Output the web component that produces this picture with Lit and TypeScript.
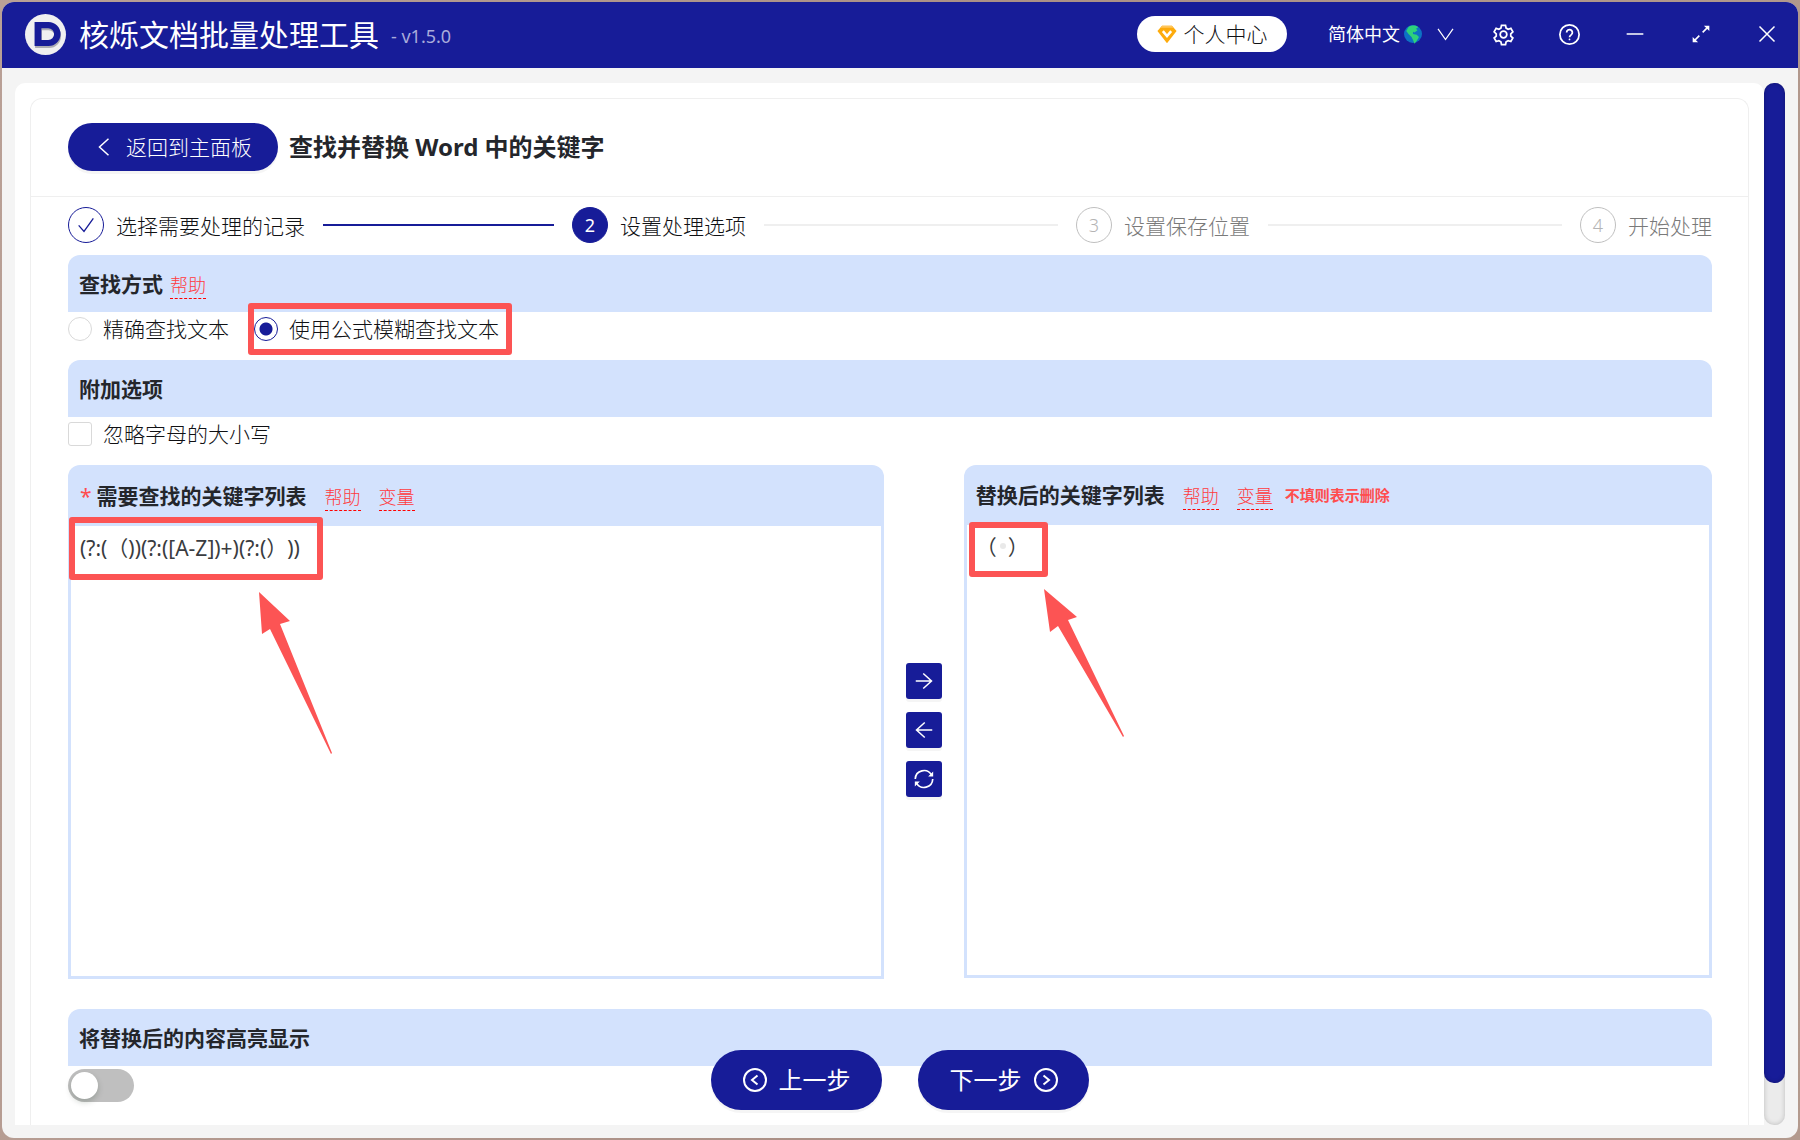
import { LitElement, html, css, svg, nothing } from "lit";
import { customElement, state } from "lit/decorators.js";
import { classMap } from "lit/directives/class-map.js";

const icon = (cls: string, body: unknown, box = "0 0 24 24") =>
  html`<svg class="icon ${cls}" viewBox=${box} aria-hidden="true">${body}</svg>`;

const icons = {
  logo: svg`<circle cx="12" cy="12" r="12" fill="#f0f0f0"/>
    <path d="M5.6 5h8.2a7 7 0 0 1 0 14H5.6z M9.6 8.6v6.9h4a3.45 3.45 0 0 0 0-6.9z" fill="#8e8e98" fill-rule="evenodd" transform="translate(0.3 0.9)" opacity="0.7"/>
    <path d="M5.6 4.7h8.2a7 7 0 0 1 0 14H5.6z M9.6 8.3v6.9h4a3.45 3.45 0 0 0 0-6.9z" fill="#171c98" fill-rule="evenodd"/>`,
  gem: svg`<path d="M6 2h12l5.5 6.5L12 23 0.5 8.5z" fill="#fdab0c"/>
    <path d="M6 2h12l2 2.5H4z" fill="#ffc65c"/>
    <path d="M7 8.5l5 6 5-6" fill="none" stroke="#fff" stroke-width="3"/>`,
  earth: svg`<circle cx="12" cy="12" r="12" fill="#0d72c4"/>
    <path d="M6 2.5C10 0 17 0 19 3l-3 2 2 2-4 3-2-1 0 3 5 1 3 3-3 5-3 4-2-5-2-4-4-4-3-4z" fill="#2ed27a"/>`,
  chevronDown: svg`<path d="M0 3l12 17 12-17"/>`,
  chevronLeft: svg`<path d="M18 1L6 12l12 11"/>`,
  gear: svg`<circle cx="12" cy="12" r="3.8"/>
    <path d="M9.7 1.5h4.6l.7 3.2 2.3 1.3 3.1-1 2.3 4-2.4 2.2v2.6l2.4 2.2-2.3 4-3.1-1-2.3 1.3-.7 3.2H9.7L9 20.3 6.700 19l-3.100 1-2.300-4 2.400-2.200v-2.600L1.300 9l2.300-4 3.100 1L9 4.700z"/>`,
  help: svg`<circle cx="12" cy="12" r="11"/><path d="M8.700 9.600a3.300 3.300 0 1 1 5.400 2.600c-1.300 1-2.100 1.500-2.100 3"/><circle cx="12" cy="17.600" r="1" fill="currentColor" stroke="none"/>`,
  minus: svg`<path d="M2 12h20"/>`,
  expand: svg`<path d="M14 10l7-7M10 14l-7 7"/><path d="M15.500 2H22v6.500zM2 15.500V22h6.500z" fill="currentColor" stroke="none"/>`,
  close: svg`<path d="M2 2l20 20M22 2L2 22"/>`,
  check: svg`<path d="M1 12.500l8 9L23 2"/>`,
  right: svg`<path d="M1 12h21M11 2l11 10-11 10"/>`,
  left: svg`<path d="M23 12H2M13 2L2 12l11 10"/>`,
  swap: svg`<path d="M1.500 12A10.500 10.500 0 0 1 21 7M22.500 12A10.500 10.500 0 0 1 3 17"/><path d="M23 3v6h-6zM1 21v-6h6z" fill="currentColor" stroke="none"/>`,
  prev: svg`<circle cx="12" cy="12" r="11"/><path d="M14.500 7.500L9 12l5.500 4.500"/>`,
  next: svg`<circle cx="12" cy="12" r="11"/><path d="M9.500 7.500L15 12l-5.500 4.500"/>`,
};

interface Step { title: string; status: "done" | "active" | "wait"; }

const STEPS: Step[] = [
  { title: "选择需要处理的记录", status: "done" },
  { title: "设置处理选项", status: "active" },
  { title: "设置保存位置", status: "wait" },
  { title: "开始处理", status: "wait" },
];

@customElement("app-root")
export class AppRoot extends LitElement {
  @state() private mode = "fuzzy";

  static styles = css`
    :host {
      --brand: #171c98;
      --soft: #d3e2fd;
      --mark: #fc5454;
      display: block;
      box-sizing: border-box;
      height: 100vh;
      padding: 2px;
      background: linear-gradient(100deg, #b9a096, #ab9086 50%, #b39a8e);
      color: #101114;
      font: 300 21px/30px "Noto Sans", "Noto Sans CJK SC", sans-serif;
    }
    * { box-sizing: border-box; }
    button, textarea, input { font: inherit; color: inherit; margin: 0; }
    button { border: 0; padding: 0; background: none; cursor: pointer; }
    h1, h2 { margin: 0; font-weight: 700; color: #24262b; }
    h2 { font-size: 21px; }
    .icon { flex: none; display: block; fill: none; stroke: currentColor; stroke-width: 2; overflow: visible; }
    .logo, .gem, .earth { stroke: none; }
    .s15 { width: 15px; height: 15px; }
    .s16 { width: 16px; height: 16px; }
    .s18 { width: 18px; height: 18px; }
    .s20 { width: 20px; height: 20px; }
    .s21 { width: 21px; height: 21px; }
    .s24 { width: 24px; height: 24px; }
    .s41 { width: 41px; height: 41px; }

    .window { height: 100%; display: flex; flex-direction: column; border-radius: 12px; overflow: hidden; background: #f4f4f4; }
    .titlebar { flex: none; height: 66px; padding: 0 10px 2px 23px; display: flex; align-items: center; background: var(--brand); color: #fff; }
    .name { font-size: 30px; font-weight: 400; line-height: 44px; margin-left: 13px; padding-top: 2px; }
    .version { margin-left: 12px; padding-top: 4px; font-size: 18px; font-weight: 400; color: #a9abdb; }
    .tools { margin-left: auto; display: flex; align-items: center; }
    .account { height: 36px; width: 150px; border-radius: 18px; background: #fff; color: #101114; display: flex; align-items: center; justify-content: center; gap: 7px; }
    .lang { margin-left: 41px; display: flex; align-items: center; gap: 4px; font-size: 18px; font-weight: 400; }
    .lang .s15 { margin-left: 12px; }
    .winbtns { display: flex; margin-left: 17px; }
    .winbtns button { width: 66px; height: 42px; display: grid; place-items: center; }
    .winbtns button:last-child { width: 42px; margin-left: 12px; }

    .body { flex: 1; min-height: 0; display: flex; padding: 15px 13px 13px; }
    .sheet { flex: 1; min-width: 0; padding: 15px 15px 0; background: #fff; border-radius: 10px 10px 0 0; }
    .card { height: 100%; display: flex; flex-direction: column; border: 1px solid #efefef; border-bottom: 0; border-radius: 12px 12px 0 0; }
    .track { flex: none; width: 21px; border-radius: 10px; background: #ebebeb; box-shadow: inset 0 0 5px #0003; }
    .thumb { height: 96%; border-radius: 10px; background: var(--brand); box-shadow: inset 0 0 4px #0004; }

    .cardhead { flex: none; height: 98px; padding: 0 37px 2px; display: flex; align-items: center; gap: 11px; border-bottom: 1px solid #efefef; }
    .cardhead h1 { font-size: 24px; line-height: 36px; }
    .back { height: 48px; padding: 0 26px 0 27px; display: flex; align-items: center; gap: 13px; border-radius: 24px; background: var(--brand); color: #fff; box-shadow: 0 3px 0 #0000000a; }
    .content { flex: 1; min-height: 0; padding: 10px 36px 23px 37px; display: flex; flex-direction: column; }

    .steps { list-style: none; margin: 0 0 12px; padding: 0; display: flex; }
    .step { flex: 1; display: flex; align-items: center; padding-right: 18px; }
    .step:last-child { flex: none; padding-right: 0; }
    .step:not(:last-child)::after { content: ""; flex: 1; height: 2px; margin-left: 18px; background: #efefef; }
    .step.done::after { background: var(--brand); }
    .steptext { padding-top: 2px; }
    .dot { flex: none; width: 36px; height: 36px; margin-right: 12px; border: 1px solid #c0c0c0; border-radius: 50%; display: grid; place-items: center; font-size: 18px; color: #b4b4b4; }
    .done .dot { border-color: var(--brand); color: var(--brand); }
    .active .dot { border-color: var(--brand); background: var(--brand); color: #fff; font-weight: 400; }
    .wait { color: #7a7a7a; }

    .bar { flex: none; height: 57px; padding: 0 11px; display: flex; align-items: center; background: var(--soft); border-radius: 12px 12px 0 0; }
    .link { margin-top: 3px; font-size: 18px; line-height: 26px; color: #ff3a3d; text-decoration: none; border-bottom: 1px dashed #f00; }
    .bar .link { margin-left: 7px; }
    .options { flex: none; height: 48px; padding-top: 2px; display: flex; align-items: flex-start; gap: 25px; }
    .option { display: flex; align-items: center; gap: 11px; position: relative; }
    .option input { appearance: none; flex: none; width: 24px; height: 24px; border: 1px solid #d9d9d9; background: #fff; }
    .option input[type="radio"] { border-radius: 50%; }
    .option input[type="checkbox"] { border-radius: 3px; }
    .option input[type="radio"]:checked { border-color: var(--brand); background: radial-gradient(circle, var(--brand) 6px, #fff 7px); }

    .editors { flex: 1; min-height: 200px; display: flex; margin-bottom: 30px; }
    .editor { display: flex; flex-direction: column; background: var(--soft); border-radius: 12px 12px 0 0; padding: 0 3px 3px; position: relative; }
    .find { flex: 816; }
    .replace { flex: 748; margin-bottom: 1px; }
    .edhead { flex: none; height: 61px; padding: 0 9px; display: flex; align-items: center; }
    .replace .edhead { height: 60px; }
    .edhead .link { margin-left: 18px; }
    .star { color: #ff4d4f; margin-right: 5px; font-weight: 400; }
    .note { margin-left: 12px; font-size: 15px; font-weight: 700; color: #ff4d4f; }
    textarea { flex: 1; width: 100%; padding: 7px 9px; border: 0; border-radius: 0; outline: 0; resize: none; background: #fff; color: #3a3c40; font-weight: 400; text-spacing-trim: space-all; }
    .moves { flex: none; width: 80px; display: flex; flex-direction: column; align-items: center; justify-content: center; gap: 13px; padding-top: 15px; }
    .moves button { width: 36px; height: 36px; display: grid; place-items: center; border-radius: 3px; background: var(--brand); color: #fff; box-shadow: 0 3px 0 #0000000a; }

    .switch { appearance: none; flex: none; width: 66px; height: 33px; margin: 3px 0 0; border-radius: 17px; background: #bfbfbf; padding: 3px; cursor: pointer; }
    .switch::before { content: ""; display: block; width: 27px; height: 27px; border-radius: 50%; background: #fff; box-shadow: 0 3px 6px #00230b33; }
    .switch:checked { background: var(--brand); }
    .switch:checked::before { margin-left: auto; }

    .pager { position: absolute; left: 0; right: 0; bottom: 30px; display: flex; justify-content: center; gap: 36px; pointer-events: none; }
    .pager button { pointer-events: auto; width: 171px; height: 60px; display: flex; align-items: center; justify-content: center; gap: 12px; border-radius: 30px; background: var(--brand); color: #fff; font-size: 24px; font-weight: 400; box-shadow: 0 3px 0 #0000000a; }

    .frame { position: absolute; border: 6px solid var(--mark); border-radius: 3px; pointer-events: none; }
    .frame-mode { left: -6px; top: -11px; right: -13px; bottom: -11px; }
    .frame-find { left: 1px; top: 52px; width: 254px; height: 63px; }
    .frame-replace { left: 5px; top: 57px; width: 79px; height: 55px; }
    .arrow { position: absolute; fill: var(--mark); pointer-events: none; }
    .arrow-find { left: 191px; top: 127px; width: 73px; height: 162px; }
    .arrow-replace { left: 80px; top: 124px; width: 80px; height: 148px; }
    .speck { position: absolute; left: 36px; top: 78px; width: 6px; height: 6px; border-radius: 50%; background: #e9e9e9; }
  `;

  private stepItem(step: Step, i: number) {
    return html`<li class=${classMap({ step: true, [step.status]: true })}>
      <span class="dot">${step.status === "done" ? icon("s16", icons.check) : i + 1}</span>
      <span class="steptext">${step.title}</span>
    </li>`;
  }

  private radio(value: string, label: string, framed = false) {
    return html`<label class="option">
      <input type="radio" name="mode" .checked=${this.mode === value} @change=${() => (this.mode = value)} />
      <span>${label}</span>
      ${framed ? html`<span class="frame frame-mode"></span>` : nothing}
    </label>`;
  }

  render() {
    return html`
      <div class="window">
        <header class="titlebar">
          ${icon("logo s41", icons.logo)}
          <span class="name">核烁文档批量处理工具</span>
          <span class="version">- v1.5.0</span>
          <div class="tools">
            <button class="account">${icon("gem s20", icons.gem)}<span>个人中心</span></button>
            <button class="lang">简体中文${icon("earth s18", icons.earth)}${icon("s15", icons.chevronDown)}</button>
            <div class="winbtns">
              <button aria-label="设置">${icon("s21", icons.gear)}</button>
              <button aria-label="帮助">${icon("s21", icons.help)}</button>
              <button aria-label="最小化">${icon("s20", icons.minus)}</button>
              <button aria-label="最大化">${icon("s20", icons.expand)}</button>
              <button aria-label="关闭">${icon("s18", icons.close)}</button>
            </div>
          </div>
        </header>
        <div class="body">
          <main class="sheet">
            <div class="card">
              <div class="cardhead">
                <button class="back">${icon("s18", icons.chevronLeft)}<span>返回到主面板</span></button>
                <h1>查找并替换 Word 中的关键字</h1>
              </div>
              <div class="content">
                <ol class="steps">${STEPS.map((s, i) => this.stepItem(s, i))}</ol>
                <div class="bar"><h2>查找方式</h2><a class="link" href="#help">帮助</a></div>
                <div class="options">
                  ${this.radio("exact", "精确查找文本")}
                  ${this.radio("fuzzy", "使用公式模糊查找文本", true)}
                </div>
                <div class="bar"><h2>附加选项</h2></div>
                <div class="options">
                  <label class="option"><input type="checkbox" /><span>忽略字母的大小写</span></label>
                </div>
                <div class="editors">
                  <section class="editor find">
                    <div class="edhead">
                      <span class="star">*</span>
                      <h2><label for="find">需要查找的关键字列表</label></h2>
                      <a class="link" href="#help">帮助</a><a class="link" href="#vars">变量</a>
                    </div>
                    <textarea id="find" spellcheck="false" .value=${"(?:(（))(?:([A-Z])+)(?:(）))"}></textarea>
                    <span class="frame frame-find"></span>
                    <svg class="arrow arrow-find" viewBox="0 0 73 162"><path d="M0 0L31 29 21 32 73 161 72 162 11 37 3 42z"/></svg>
                  </section>
                  <div class="moves">
                    <button aria-label="右移">${icon("s18", icons.right)}</button>
                    <button aria-label="左移">${icon("s18", icons.left)}</button>
                    <button aria-label="交换">${icon("s20", icons.swap)}</button>
                  </div>
                  <section class="editor replace">
                    <div class="edhead">
                      <h2><label for="replace">替换后的关键字列表</label></h2>
                      <a class="link" href="#help">帮助</a><a class="link" href="#vars">变量</a>
                      <span class="note">不填则表示删除</span>
                    </div>
                    <textarea id="replace" spellcheck="false" .value=${"（  ）"}></textarea>
                    <span class="speck"></span>
                    <span class="frame frame-replace"></span>
                    <svg class="arrow arrow-replace" viewBox="0 0 80 148"><path d="M0 0L33 28 24 31 80 147 79 148 14 37 6 43z"/></svg>
                  </section>
                </div>
                <div class="bar"><h2><label for="highlight">将替换后的内容高亮显示</label></h2></div>
                <input id="highlight" class="switch" type="checkbox" role="switch" />
              </div>
            </div>
          </main>
          <div class="track"><div class="thumb"></div></div>
        </div>
      </div>
      <nav class="pager">
        <button>${icon("s24", icons.prev)}<span>上一步</span></button>
        <button><span>下一步</span>${icon("s24", icons.next)}</button>
      </nav>
    `;
  }
}
